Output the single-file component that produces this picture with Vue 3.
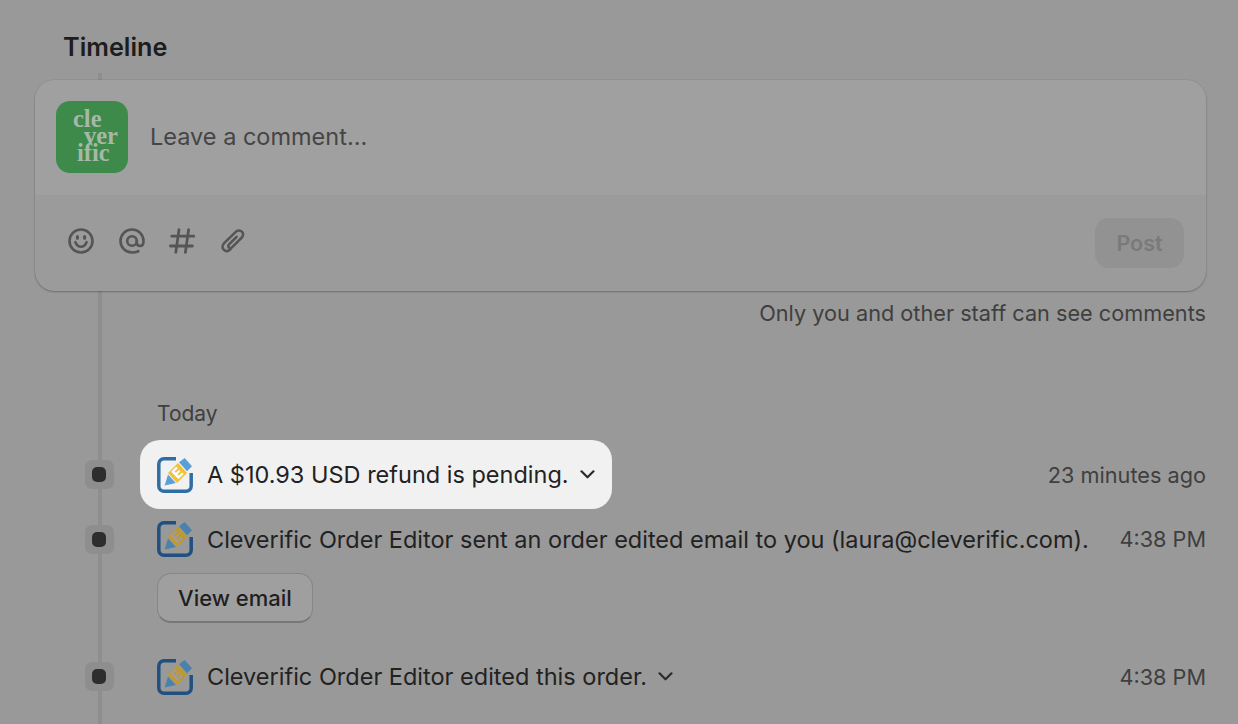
<template>
  <div class="page">
    <h2 class="title">Timeline</h2>

    <div class="timeline">
      <div class="comment-box">
        <div class="comment-top">
          <div class="avatar">
            <span class="logo-line l1">cle</span>
            <span class="logo-line l2">ver</span>
            <span class="logo-line l3">ific</span>
          </div>
          <span class="placeholder">Leave a comment...</span>
        </div>
        <div class="comment-bottom">
          <div class="tools">
            <svg class="tool" viewBox="0 0 26 26" fill="none" stroke="#555" stroke-width="2.6" stroke-linecap="round">
              <circle cx="13" cy="13" r="11.5" />
              <path d="M7.4 14.2c1.200 3 3.200 4.500 5.600 4.500s4.400-1.500 5.600-4.500" />
              <path d="M9.400 8.400v1.800M16.600 8.400v1.800" stroke-width="3" />
            </svg>
            <svg class="tool" viewBox="0 0 26 26" fill="none" stroke="#555" stroke-width="2.6" stroke-linecap="round">
              <path d="M19.400 23.200c-2 .9-4 1.300-6.400 1.300C6.600 24.500 1.500 19.400 1.500 13S6.600 1.500 13 1.500 24.500 6.600 24.500 13c0 3-1.300 5-3.500 5-1.900 0-3.200-1.400-3.200-3.400V13" />
              <circle cx="13" cy="13" r="4.800" />
            </svg>
            <svg class="tool" viewBox="0 0 26 26" fill="none" stroke="#555" stroke-width="2.8" stroke-linecap="round">
              <path d="M10 1.600 6.800 24.400M19.600 1.600l-3.200 22.800M2.800 8.200h22M1.400 18h22" />
            </svg>
            <svg class="tool" viewBox="0 0 26 26" fill="none" stroke="#555" stroke-width="2.5" stroke-linecap="round" stroke-linejoin="round">
              <path d="M16.600 8.800 9 16.400c-1 1-1 2.300-.1 3.100.9.900 2.200.8 3.100-.1l9.400-9.400c2.100-2.100 2.200-4.700.5-6.300-1.700-1.700-4.300-1.600-6.400.5L4.600 14.600c-2.400 2.400-2.700 5.300-.9 7.100 1.800 1.800 4.500 1.700 6.800-.4" />
            </svg>
          </div>
          <button class="post-btn">Post</button>
        </div>
      </div>
      <p class="note">Only you and other staff can see comments</p>

      <p class="day">Today</p>

      <div
        v-for="(event, index) in events"
        :key="index"
        class="event"
        :class="{ 'has-action': event.action }"
      >
        <span class="dot"><i></i></span>
        <div class="event-body">
          <div class="event-main" :class="{ highlight: event.active }">
            <svg class="editor-icon" viewBox="0 0 36 36">
              <path class="frame" d="M19 1.800H7A5.200 5.200 0 0 0 1.800 7v22A5.200 5.200 0 0 0 7 34.200h22a5.200 5.200 0 0 0 5.200-5.200V16" fill="none" stroke-width="3.500" />
              <path class="blue" d="M7.700 28.500 11 17.500 18.800 26Z" />
              <path class="band" d="M11 16 21 6 30 16 20 26Z" />
              <path class="blue" d="M22 5.300 27.700 1 35 9.300 30 14.300Z" />
              <text class="mark" x="20.500" y="21" text-anchor="middle" transform="rotate(-45 20.500 16)">E</text>
            </svg>
            <span class="event-text">{{ event.text }}</span>
            <svg v-if="event.chevron" class="chevron" viewBox="0 0 15 9" fill="none" stroke="#2b2b2b" stroke-width="2.200" stroke-linecap="round" stroke-linejoin="round">
              <path d="M1.500 1.300 7.500 7.300l6-6" />
            </svg>
          </div>
          <span class="event-time">{{ event.time }}</span>
        </div>
        <button v-if="event.action" class="action-btn">{{ event.action }}</button>
      </div>
    </div>
  </div>
</template>

<script setup>
const events = [
  { text: 'A $10.93 USD refund is pending.', time: '23 minutes ago', chevron: true, active: true },
  { text: 'Cleverific Order Editor sent an order edited email to you (laura@cleverific.com).', time: '4:38 PM', action: 'View email' },
  { text: 'Cleverific Order Editor edited this order.', time: '4:38 PM', chevron: true }
]
</script>

<style>
html,
body {
  margin: 0;
  background: #999999;
}
</style>

<style scoped>
.page {
  height: 724px;
  overflow: hidden;
  box-sizing: border-box;
  padding: 32px 32px 0 35px;
  background: #999999;
  font-family: Inter, "Liberation Sans", sans-serif;
  color: #222222;
}

.title {
  margin: 0 0 18px 28px;
  font-size: 25.200px;
  line-height: 30px;
  font-weight: 600;
  color: #1d1d1d;
}

.timeline {
  position: relative;
}

/* vertical rail behind everything */
.timeline::before {
  content: "";
  position: absolute;
  left: 63px;
  top: -7px;
  bottom: -200px;
  width: 4px;
  background: #8e8e8e;
}

.comment-box {
  position: relative;
  width: 1171px;
  height: 211px;
  border-radius: 20px;
  overflow: hidden;
  background: #9b9b9b;
  box-shadow: 0 1px 2px rgba(0, 0, 0, 0.25), 0 0 0 1px rgba(0, 0, 0, 0.04);
}

.comment-top {
  display: flex;
  align-items: center;
  gap: 22px;
  height: 115px;
  box-sizing: border-box;
  padding: 0 21px 1px;
  background: #a0a0a0;
}

.avatar {
  display: flex;
  flex-direction: column;
  justify-content: center;
  flex: none;
  width: 72px;
  height: 72px;
  box-sizing: border-box;
  padding: 0 0 4px 17px;
  border-radius: 14px;
  background: #3d8a4b;
  color: #a7b8a9;
  font-family: "Liberation Serif", serif;
  font-size: 24.500px;
  line-height: 17px;
  font-weight: 700;
}

.logo-line {
  display: block;
}

.l2 {
  margin-left: 11px;
}

.l3 {
  margin-left: 4px;
}

.placeholder {
  margin-bottom: 2px;
  font-size: 23.500px;
  color: #454545;
}

.comment-bottom {
  display: flex;
  align-items: center;
  justify-content: space-between;
  height: 96px;
  box-sizing: border-box;
  padding: 0 22px 0 33px;
}

.tools {
  display: flex;
  gap: 24.500px;
  margin-bottom: 4px;
}

.tool {
  width: 26px;
  height: 26px;
}

.post-btn {
  width: 89px;
  height: 50px;
  border: none;
  border-radius: 14px;
  background: #929292;
  color: #7a7a7a;
  font-family: inherit;
  font-size: 21.500px;
  font-weight: 600;
}

.note {
  margin: 8px 0 0;
  width: 1171px;
  text-align: right;
  font-size: 21.700px;
  line-height: 28px;
  color: #3f3f3f;
}

.day {
  margin: 73px 0 12px 122px;
  font-size: 21px;
  line-height: 28px;
  color: #3f3f3f;
}

.event {
  position: relative;
  width: 1171px;
}

.dot {
  position: absolute;
  left: 50px;
  top: 20px;
  display: flex;
  align-items: center;
  justify-content: center;
  width: 29px;
  height: 29px;
  border-radius: 7px;
  background: #8e8e8e;
}

.has-action .dot {
  top: 16px;
}

.dot i {
  display: block;
  width: 14px;
  height: 15px;
  margin-right: 1px;
  border-radius: 5px;
  background: #2e2e2e;
}

.event-body {
  display: flex;
  align-items: center;
  justify-content: space-between;
  height: 69px;
  padding-left: 105px;
}

.has-action .event-body {
  height: 60px;
}

.event-main {
  display: flex;
  align-items: center;
  height: 69px;
  box-sizing: border-box;
  padding: 0 17px;
  border-radius: 20px;
}

.highlight {
  background: #f1f1f1;
}

.editor-icon {
  flex: none;
  width: 36px;
  height: 36px;
  margin-right: 14px;
}

.frame {
  stroke: #1f5080;
}

.blue {
  fill: #4a82ad;
}

.band {
  fill: #c09a2c;
}

.mark {
  fill: #a09c94;
  font-size: 14px;
  font-weight: 800;
}

.highlight .frame {
  stroke: #2f6ea5;
}

.highlight .blue {
  fill: #5aa0d6;
}

.highlight .band {
  fill: #f0c23a;
}

.highlight .mark {
  fill: #ffffff;
}

.event-text {
  font-size: 23.500px;
  color: #222222;
  white-space: nowrap;
}

.chevron {
  width: 15px;
  height: 9px;
  margin-left: 11px;
}

.event-time {
  font-size: 21.700px;
  color: #3f3f3f;
}

.action-btn {
  display: block;
  width: 156px;
  height: 50px;
  margin: 4px 0 19px 122px;
  border: 1px solid #868686;
  border-bottom: 2px solid #777777;
  border-radius: 14px;
  background: #9f9f9f;
  color: #1f1f1f;
  font-family: inherit;
  font-size: 22px;
  font-weight: 500;
}
</style>
